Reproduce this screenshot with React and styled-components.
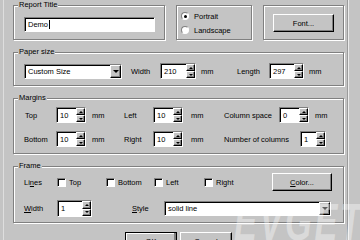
import React from 'react'
import styled, { createGlobalStyle } from 'styled-components'

const face = '#c4c4c4'
const shadow = '#808080'

const GlobalStyle = createGlobalStyle`
  html, body {
    margin: 0;
    padding: 0;
    background: ${face};
  }
  body {
    font-family: "Liberation Sans", Arial, sans-serif;
    font-size: 7.5px;
    color: #000;
  }
`

const Window = styled.div`
  position: relative;
  display: flex;
  align-items: flex-start;
  width: 360px;
  height: 240px;
  overflow: hidden;
  background: ${face};
`

const Edge = styled.div`
  align-self: stretch;
  width: 1px;
  margin-left: ${({ $ml }) => $ml}px;
  background: ${({ $color }) => $color};
`

const Dialog = styled.div`
  display: flex;
  flex-direction: column;
  width: 331px;
  flex-shrink: 0;
  margin-left: 9px;
  padding-top: 5px;
  & > * {
    flex-shrink: 0;
  }
`

const TopRow = styled.div`
  display: flex;
  gap: 11px;
`

const Group = styled.div`
  position: relative;
  box-sizing: border-box;
  width: ${({ $w }) => ($w ? `${$w}px` : 'auto')};
  height: ${({ $h }) => $h}px;
  margin-top: ${({ $mt }) => $mt || 0}px;
  padding: ${({ $pad }) => $pad};
  border: 1px solid ${shadow};
  box-shadow: inset 1px 1px 0 #fff, 1px 1px 0 #fff;
`

const Legend = styled.span`
  position: absolute;
  top: -6px;
  left: 4px;
  padding: 0 1px;
  background: ${face};
  line-height: 10px;
  white-space: nowrap;
`

const Row = styled.div`
  display: flex;
  align-items: center;
  height: ${({ $h }) => $h || 16}px;
  margin-top: ${({ $mt }) => $mt || 0}px;
`

const Label = styled.span`
  box-sizing: border-box;
  flex-shrink: 0;
  width: ${({ $w }) => $w}px;
  padding-left: ${({ $pl }) => $pl || 0}px;
  white-space: nowrap;
  u {
    text-decoration: underline;
  }
`

const Sunken = styled.div`
  display: flex;
  box-sizing: border-box;
  flex-shrink: 0;
  width: ${({ $w }) => $w}px;
  height: ${({ $h }) => $h || 16}px;
  border: 1px solid;
  border-color: ${shadow} #fff #fff ${shadow};
  box-shadow: inset 1px 1px 0 #000;
  background: #fff;
`

const FieldText = styled.div`
  flex: 1;
  display: flex;
  align-items: center;
  padding-left: 3px;
  white-space: nowrap;
  overflow: hidden;
`

const Caret = styled.span`
  display: inline-block;
  width: 1px;
  height: 9px;
  margin-left: 1px;
  background: #000;
`

const Spinner = styled.div`
  display: flex;
  flex-direction: column;
  width: 9px;
`

const Raised = styled.div`
  box-sizing: border-box;
  display: flex;
  align-items: center;
  justify-content: center;
  background: ${face};
  border: 1px solid;
  border-color: #fff #000 #000 #fff;
  box-shadow: inset -1px -1px 0 ${shadow};
`

const SpinButton = styled(Raised)`
  flex: 1;
`

const DropButton = styled(Raised)`
  width: 11px;
`

const Arrow = styled.span`
  width: 0;
  height: 0;
  border-left: ${({ $s }) => $s}px solid transparent;
  border-right: ${({ $s }) => $s}px solid transparent;
  ${({ $up, $s }) =>
    $up ? `border-bottom: ${$s}px solid #000;` : `border-top: ${$s}px solid #000;`}
`

const Button = styled(Raised)`
  flex-shrink: 0;
  width: ${({ $w }) => $w}px;
  height: 18px;
  ${({ $default }) =>
    $default &&
    `
    outline: 1px solid #000;
    outline-offset: -1px;
    box-shadow: inset -2px -2px 0 ${shadow}, inset 1px 1px 0 #fff;
  `}
  u {
    text-decoration: underline;
  }
`

const RadioRow = styled.div`
  display: flex;
  align-items: center;
  gap: 5px;
  height: 14px;
`

const RadioDot = styled.span`
  position: relative;
  box-sizing: border-box;
  width: 8px;
  height: 8px;
  border-radius: 50%;
  border: 1px solid;
  border-color: ${shadow} #fff #fff ${shadow};
  background: #fff;
  &::after {
    content: '';
    display: ${({ $on }) => ($on ? 'block' : 'none')};
    position: absolute;
    left: 1.5px;
    top: 1.5px;
    width: 3px;
    height: 3px;
    border-radius: 50%;
    background: #000;
  }
`

const CheckItem = styled.div`
  display: flex;
  align-items: center;
  gap: 3px;
  flex-shrink: 0;
  width: ${({ $w }) => $w}px;
`

const Box = styled.span`
  box-sizing: border-box;
  width: 9px;
  height: 9px;
  border: 1px solid;
  border-color: ${shadow} #fff #fff ${shadow};
  box-shadow: inset 1px 1px 0 #000;
  background: #fff;
`

const ButtonRow = styled.div`
  display: flex;
  justify-content: center;
  gap: 3px;
  margin-top: 9px;
`

const Watermark = styled.div`
  position: absolute;
  left: 234px;
  top: 196px;
  font-size: 52px;
  line-height: 52px;
  font-weight: bold;
  font-style: italic;
  letter-spacing: 4px;
  color: rgba(255, 255, 255, 0.38);
  transform: scaleX(0.66);
  transform-origin: left top;
  white-space: nowrap;
  pointer-events: none;
`

const SpinBox = ({ value, w, h }) => (
  <Sunken $w={w} $h={h}>
    <FieldText>{value}</FieldText>
    <Spinner>
      <SpinButton>
        <Arrow $up $s={2} />
      </SpinButton>
      <SpinButton>
        <Arrow $s={2} />
      </SpinButton>
    </Spinner>
  </Sunken>
)

const Combo = ({ value, w }) => (
  <Sunken $w={w} $h={15}>
    <FieldText>{value}</FieldText>
    <DropButton>
      <Arrow $s={3} />
    </DropButton>
  </Sunken>
)

const Check = ({ label, w }) => (
  <CheckItem $w={w}>
    <Box />
    <span>{label}</span>
  </CheckItem>
)

const App = () => (
  <Window>
    <GlobalStyle />
    <Edge $ml={3} $color="#dedede" />
    <Dialog>
      <TopRow>
        <Group $w={152} $h={35} $pad="11px 0 0 10px">
          <Legend>Report Title</Legend>
          <Sunken $w={131} $h={15}>
            <FieldText>
              Demo
              <Caret />
            </FieldText>
          </Sunken>
        </Group>
        <Group $w={76} $h={35} $pad="3px 0 0 4px">
          <RadioRow>
            <RadioDot $on />
            <span>Portrait</span>
          </RadioRow>
          <RadioRow>
            <RadioDot />
            <span>Landscape</span>
          </RadioRow>
        </Group>
        <Group $w={81} $h={35} $pad="8px 0 0 9px">
          <Button $w={61}>Font...</Button>
        </Group>
      </TopRow>

      <Group $h={34} $mt={12} $pad="10px 0 0 10px">
        <Legend>Paper size</Legend>
        <Row>
          <Combo value="Custom Size" w={98} />
          <Label $w={38} $pl={9}>Width</Label>
          <SpinBox value="210" w={36} />
          <Label $w={41} $pl={5}>mm</Label>
          <Label $w={32}>Length</Label>
          <SpinBox value="297" w={35} />
          <Label $w={30} $pl={5}>mm</Label>
        </Row>
      </Group>

      <Group $h={56} $mt={12} $pad="8px 0 0 10px">
        <Legend>Margins</Legend>
        <Row>
          <Label $w={32} $pl={1}>Top</Label>
          <SpinBox value="10" w={30} />
          <Label $w={38} $pl={6}>mm</Label>
          <Label $w={29}>Left</Label>
          <SpinBox value="10" w={30} />
          <Label $w={41} $pl={8}>mm</Label>
          <Label $w={55}>Column space</Label>
          <SpinBox value="0" w={30} />
          <Label $w={20} $pl={6}>mm</Label>
        </Row>
        <Row $mt={8}>
          <Label $w={32}>Bottom</Label>
          <SpinBox value="10" w={30} />
          <Label $w={38} $pl={6}>mm</Label>
          <Label $w={29}>Right</Label>
          <SpinBox value="10" w={30} />
          <Label $w={41} $pl={8}>mm</Label>
          <Label $w={76}>Number of columns</Label>
          <SpinBox value="1" w={26} />
        </Row>
      </Group>

      <Group $h={57} $mt={12} $pad="6px 0 0 10px">
        <Legend>Frame</Legend>
        <Row $h={18}>
          <Label $w={33}>
            Li<u>n</u>es
          </Label>
          <Check label="Top" w={49} />
          <Check label="Bottom" w={48} />
          <Check label="Left" w={50} />
          <Check label="Right" w={68} />
          <Button $w={60}>
            <span>
              <u>C</u>olor...
            </span>
          </Button>
        </Row>
        <Row $h={17} $mt={9}>
          <Label $w={33}>
            <u>W</u>idth
          </Label>
          <SpinBox value="1" w={35} h={17} />
          <Label $w={72} $pl={40}>
            <u>S</u>tyle
          </Label>
          <Combo value="solid line" w={167} />
        </Row>
      </Group>

      <ButtonRow>
        <Button $w={52} $default>
          OK
        </Button>
        <Button $w={52}>Cancel</Button>
      </ButtonRow>
    </Dialog>
    <Edge $ml={3} $color="#9a9a9a" />
    <Edge $ml={0} $color="#ececec" />
    <Watermark>EVGET</Watermark>
  </Window>
)

export default App
